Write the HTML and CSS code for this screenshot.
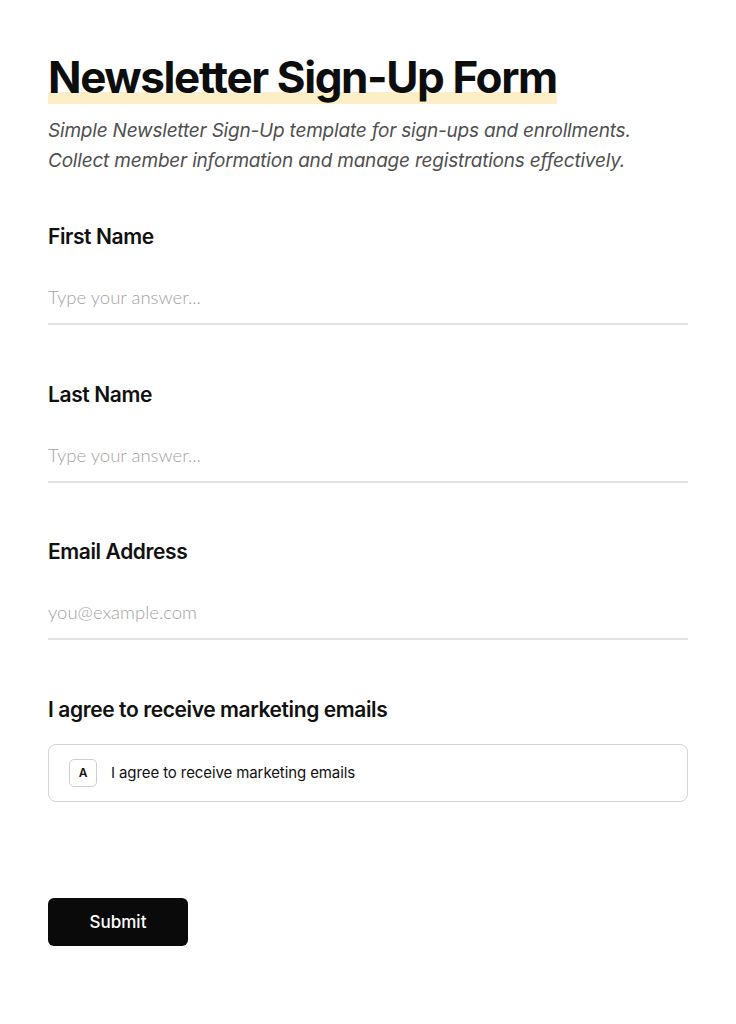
FILE: index.html
```html
<!DOCTYPE html>
<html lang="en">
<head>
<meta charset="utf-8">
<title>Newsletter Sign-Up Form</title>
<link rel="stylesheet" href="styles.css">
</head>
<body>
<main class="page">
  <header class="intro">
    <h1 class="title"><span class="title-mark">Newsletter Sign-Up Form</span></h1>
    <p class="subtitle">Simple Newsletter Sign-Up template for sign-ups and enrollments. Collect member information and manage registrations effectively.</p>
  </header>
  <form class="form">
    <div class="field">
      <label class="label">First Name</label>
      <input class="input" type="text" placeholder="Type your answer...">
    </div>
    <div class="field">
      <label class="label">Last Name</label>
      <input class="input" type="text" placeholder="Type your answer...">
    </div>
    <div class="field">
      <label class="label">Email Address</label>
      <input class="input" type="email" placeholder="you@example.com">
    </div>
    <div class="field field-last">
      <span class="label">I agree to receive marketing emails</span>
      <div class="choice">
        <span class="key">A</span>
        <span class="choice-text">I agree to receive marketing emails</span>
      </div>
    </div>
    <div class="actions">
      <button class="submit" type="button">Submit</button>
    </div>
  </form>
</main>
</body>
</html>
```
FILE: styles.css
```css
* { box-sizing: border-box; }
html, body { margin: 0; padding: 0; background: #fff; }
body { font-family: "Inter", "Noto Sans", sans-serif; color: #0d0d0d; }
.page { padding: 50px 48px 40px; width: 736px; }
.title { margin: 0; font-size: 44px; font-weight: 700; letter-spacing: -1.4px; line-height: 54px; }
.title-mark { display: inline-block; background: linear-gradient(to bottom, transparent 42px, #fcefc7 42px, #fcefc7 54px, transparent 54px); }
.subtitle { margin: 12px 0 0; font-size: 19px; font-style: italic; font-weight: 400; color: #4f4f4f; line-height: 30px; letter-spacing: -0.2px; width: 600px; }
.form { display: flex; flex-direction: column; margin-top: 48px; }
.field { display: flex; flex-direction: column; margin-bottom: 56.5px; }
.field-last { margin-bottom: 46px; }
.label { font-size: 21px; font-weight: 600; letter-spacing: -0.4px; line-height: 26px; color: #111; }
.input { margin-top: 34px; border: none; border-bottom: 2px solid #e2e2e2; padding: 0 0 13px; font-family: "Lato", sans-serif; font-weight: 300; font-size: 18.5px; line-height: 26px; color: #111; outline: none; background: transparent; }
.input::placeholder { color: #a3a3a3; }
.choice { margin-top: 21px; display: flex; align-items: center; gap: 14px; height: 58px; border: 1px solid #d3d3d3; border-radius: 8px; padding: 0 20px; }
.key { width: 28px; height: 28px; border: 1px solid #cfcfcf; border-radius: 5px; display: flex; align-items: center; justify-content: center; font-size: 12px; font-weight: 600; color: #111; }
.choice-text { font-size: 15px; color: #111; letter-spacing: -0.1px; }
.actions { margin-top: 50px; }
.submit { width: 140px; height: 48px; background: #0a0a0a; color: #fff; border: none; border-radius: 6px; font-family: "Inter", sans-serif; font-size: 17px; font-weight: 500; }
```
